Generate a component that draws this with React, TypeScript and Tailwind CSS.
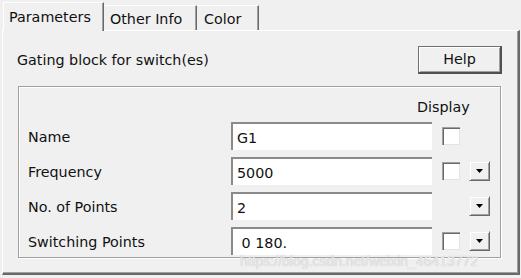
import React from 'react';

const font = { fontFamily: '"DejaVu Sans", Verdana, sans-serif' };

const Checkbox: React.FC = () => (
  <div className="w-[18px] h-[18px] bg-white border-t border-l border-[#a0a0a0] border-r-[#f0f0f0] border-b-[#f0f0f0] shadow-[inset_1px_1px_0_#696969,inset_-1px_-1px_0_#e3e3e3]" />
);

const DropButton: React.FC = () => (
  <div className="w-[21px] h-[20px] flex items-center justify-center bg-[#f0f0f0] border border-t-[#f0f0f0] border-l-[#f0f0f0] border-r-[#696969] border-b-[#696969] shadow-[inset_1px_1px_0_#fff,inset_-1px_-1px_0_#a0a0a0]">
    <svg width="7" height="4" viewBox="0 0 7 4">
      <path d="M0 0h7L3.5 4z" fill="#000" />
    </svg>
  </div>
);

const rows = [
  { label: 'Name', value: 'G1', check: true, drop: false },
  { label: 'Frequency', value: '5000', check: true, drop: true },
  { label: 'No. of Points', value: '2', check: false, drop: true },
  { label: 'Switching Points', value: '\u00a00 180.', check: true, drop: true },
];

const App: React.FC = () => {
  return (
    <div className="relative w-[521px] h-[278px] bg-[#f0f0f0] text-[14.3px] text-[#111] overflow-hidden" style={font}>
      {/* tabs */}
      <div className="relative z-10 flex items-end h-[30px] pl-[3px]">
        <div className="h-[29px] w-[101px] -mb-px bg-[#f0f0f0] border-t border-l border-white border-r border-r-[#696969] shadow-[inset_-1px_0_0_#a0a0a0] pl-[5px] pt-[4px]">
          Parameters
        </div>
        <div className="h-[25px] w-[93px] bg-[#f0f0f0] border-t border-white border-r border-r-[#696969] shadow-[inset_-1px_0_0_#a0a0a0] pl-[6px] pt-[3px]">
          Other Info
        </div>
        <div className="h-[25px] w-[62px] bg-[#f0f0f0] border-t border-white border-r border-r-[#696969] shadow-[inset_-1px_0_0_#a0a0a0] pl-[7px] pt-[3px]">
          Color
        </div>
      </div>

      {/* panel */}
      <div className="ml-[2px] w-[518px] h-[245px] border-t border-l border-white border-r-2 border-b-2 border-r-[#696969] border-b-[#696969] shadow-[inset_-1px_-1px_0_#a0a0a0]">
        <div className="flex items-center justify-between ml-[14px] w-[485px] mt-[15px]">
          <span className="pt-[2px]">Gating block for switch(es)</span>
          <button className="w-[84px] h-[28px] pt-[1px] bg-[#f0f0f0] border border-[#707070] border-r-2 border-b-2 border-r-[#505050] border-b-[#505050] shadow-[inset_1px_1px_0_#fff,inset_-1px_-1px_0_#a0a0a0]">
            Help
          </button>
        </div>

        <div className="ml-[15px] mt-[12px] w-[483px] h-[172px] border border-[#a0a0a0] shadow-[1px_1px_0_#fff,inset_1px_1px_0_#fff] pl-[9px] pt-[9px]">
          <div className="h-[20px] flex items-center pl-[389px] pt-[3px]">Display</div>
          <div className="mt-[6px] flex flex-col gap-[7px]">
            {rows.map(r => (
              <div key={r.label} className="flex items-center h-[28px]">
                <div className="w-[203px] pt-[4px]">{r.label}</div>
                <div className="w-[201px] h-[28px] bg-white border-t-2 border-l-2 border-[#8a8a8a] border-r-[#e8e8e8] border-b-[#e8e8e8] flex items-center pl-[4px] pt-[3px]">
                  {r.value}
                </div>
                <div className="ml-[10px] w-[18px]">{r.check && <Checkbox />}</div>
                <div className="ml-[9px]">{r.drop && <DropButton />}</div>
              </div>
            ))}
          </div>
        </div>
      </div>

      <div className="absolute left-[240px] top-[251px] text-[14px] text-[#e8e8e8] [text-shadow:0_0_1px_#bdbdbd] pointer-events-none" style={{ fontFamily: '"Liberation Sans", Arial, sans-serif' }}>
        https://blog.csdn.net/weixin_46413772
      </div>
    </div>
  );
};

export default App;
